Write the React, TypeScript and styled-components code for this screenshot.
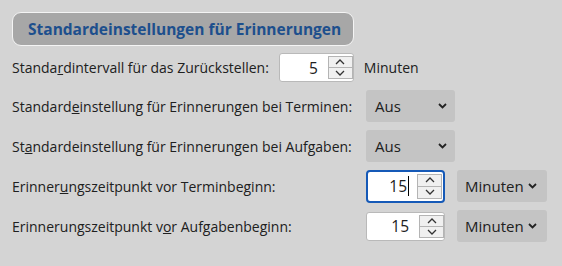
import React from "react";
import styled, { createGlobalStyle } from "styled-components";

const GlobalStyle = createGlobalStyle`
  html, body {
    margin: 0;
    padding: 0;
    background: #d4d4d4;
  }
  body {
    font-family: "Open Sans", "Noto Sans", sans-serif;
    color: #202020;
  }
`;

const Page = styled.div`
  width: 562px;
  height: 266px;
  box-sizing: border-box;
  padding: 12px 0 0 12px;
  display: flex;
  flex-direction: column;
`;

const Header = styled.div`
  width: 342px;
  height: 34px;
  box-sizing: border-box;
  border: 1px solid #f4f4f4;
  border-radius: 9px;
  background: #a7a7a7;
  display: flex;
  align-items: center;
  padding-left: 15px;
  font-size: 15.5px;
  font-weight: 700;
  color: #1d4f8d;
`;

const FirstRow = styled.div`
  margin-top: 7px;
  height: 29px;
  display: flex;
  align-items: center;
  gap: 10px;
`;

const Rows = styled.div`
  margin-top: 8px;
  display: grid;
  grid-template-columns: 354px 91px auto;
  grid-auto-rows: 32px;
  row-gap: 8px;
  align-items: center;
  justify-items: start;
`;

const Label = styled.span`
  font-size: 14px;
  white-space: nowrap;
`;

const Spin = styled.div<{ $width: number; $focused?: boolean }>`
  width: ${(p) => p.$width}px;
  height: ${(p) => (p.$focused ? 33 : 29)}px;
  box-sizing: border-box;
  background: #fff;
  border: ${(p) => (p.$focused ? "2px solid #1559b7" : "1px solid #b9b9b9")};
  border-radius: ${(p) => (p.$focused ? 4 : 3)}px;
  display: flex;
  align-items: center;
  padding: ${(p) => (p.$focused ? "2px 1px 2px 0" : "2px 0 2px 0")};
`;

const SpinValue = styled.span`
  flex: 1;
  text-align: right;
  font-size: 15.5px;
  padding-right: 10px;
  position: relative;
`;

const Caret = styled.span`
  position: absolute;
  right: 8px;
  top: 1px;
  width: 1px;
  height: 20px;
  background: #000;
`;

const SpinButtons = styled.div`
  width: 25px;
  height: 100%;
  box-sizing: border-box;
  border: 1px solid #b4b4b4;
  background: #f0f0f0;
  display: flex;
  flex-direction: column;
`;

const SpinButton = styled.div<{ $top?: boolean }>`
  flex: 1;
  display: flex;
  align-items: center;
  justify-content: center;
  border-bottom: ${(p) => (p.$top ? "1px solid #b4b4b4" : "none")};
`;

const Dropdown = styled.div<{ $width: number }>`
  width: ${(p) => p.$width}px;
  height: 32px;
  box-sizing: border-box;
  background: #c4c4c4;
  border-radius: 3px;
  display: flex;
  align-items: center;
  justify-content: space-between;
  padding: 0 8px 0 9px;
  font-size: 15px;
`;

const MinuteDropdown = styled(Dropdown)`
  justify-content: flex-start;
  gap: 4px;
  padding-left: 8px;
`;

const Plain = styled.span`
  font-size: 14px;
`;

const Chevron = ({ up }: { up?: boolean }) => (
  <svg width="10" height="6" viewBox="0 0 10 6">
    <path
      d={up ? "M1 5 L5 1 L9 5" : "M1 1 L5 5 L9 1"}
      fill="none"
      stroke="#333"
      strokeWidth="1.3"
    />
  </svg>
);

const DropChevron = () => (
  <svg width="9" height="6" viewBox="0 0 9 6">
    <path d="M1 1 L4.5 4.5 L8 1" fill="none" stroke="#222" strokeWidth="1.8" />
  </svg>
);

const SpinBox = ({
  value,
  width,
  focused,
}: {
  value: string;
  width: number;
  focused?: boolean;
}) => (
  <Spin $width={width} $focused={focused}>
    <SpinValue>
      {value}
      {focused && <Caret />}
    </SpinValue>
    <SpinButtons>
      <SpinButton $top>
        <Chevron up />
      </SpinButton>
      <SpinButton>
        <Chevron />
      </SpinButton>
    </SpinButtons>
  </Spin>
);

export default function App() {
  return (
    <Page>
      <GlobalStyle />
      <Header>Standardeinstellungen für Erinnerungen</Header>
      <FirstRow>
        <Label>
          Standa<u>r</u>dintervall für das Zurückstellen:
        </Label>
        <SpinBox value="5" width={75} />
        <Plain>Minuten</Plain>
      </FirstRow>
      <Rows>
        <Label>
          Standard<u>e</u>instellung für Erinnerungen bei Terminen:
        </Label>
        <Dropdown $width={89}>
          Aus <DropChevron />
        </Dropdown>
        <span />
        <Label>
          St<u>a</u>ndardeinstellung für Erinnerungen bei Aufgaben:
        </Label>
        <Dropdown $width={89}>
          Aus <DropChevron />
        </Dropdown>
        <span />
        <Label>
          Erinner<u>u</u>ngszeitpunkt vor Terminbeginn:
        </Label>
        <SpinBox value="15" width={79} focused />
        <MinuteDropdown $width={90}>
          Minuten <DropChevron />
        </MinuteDropdown>
        <Label>
          Erinnerungszeitpunkt v<u>o</u>r Aufgabenbeginn:
        </Label>
        <SpinBox value="15" width={79} />
        <MinuteDropdown $width={90}>
          Minuten <DropChevron />
        </MinuteDropdown>
      </Rows>
    </Page>
  );
}
